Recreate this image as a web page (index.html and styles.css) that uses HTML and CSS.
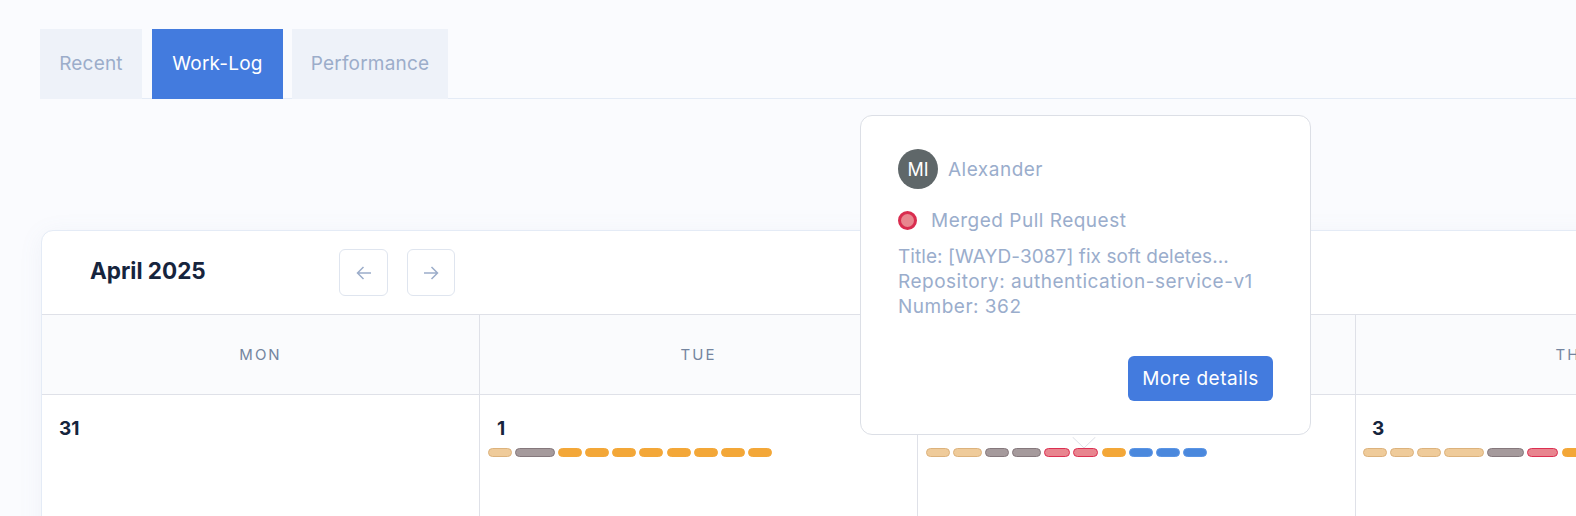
FILE: index.html
```html
<!DOCTYPE html>
<html lang="en">
<head>
  <meta charset="UTF-8" />
  <title>Work-Log</title>
  <link rel="stylesheet" href="styles.css">
</head>
<body>
  <div class="page">
    <div class="tabs">
      <a class="tab tab-recent">Recent</a>
      <a class="tab tab-active">Work-Log</a>
      <a class="tab tab-perf">Performance</a>
    </div>

    <div class="calendar">
      <div class="cal-head">
        <h2 class="cal-title">April 2025</h2>
        <button class="nav-btn nav-prev">
          <svg width="16" height="14" viewBox="0 0 16 14"><path d="M15 7H1.5M7.5 1L1.5 7l6 6" /></svg>
        </button>
        <button class="nav-btn">
          <svg width="16" height="14" viewBox="0 0 16 14"><path d="M1 7h13.5M8.5 1l6 6-6 6" /></svg>
        </button>
      </div>

      <div class="cal-grid">
        <div class="weekday">Mon</div>
        <div class="weekday">Tue</div>
        <div class="weekday">Wed</div>
        <div class="weekday">Thu</div>

        <div class="day">
          <div class="day-num">31</div>
        </div>
        <div class="day">
          <div class="day-num">1</div>
          <div class="pills">
            <span class="pill commit"></span>
            <span class="pill review w40"></span>
            <span class="pill orange"></span>
            <span class="pill orange"></span>
            <span class="pill orange"></span>
            <span class="pill orange"></span>
            <span class="pill orange"></span>
            <span class="pill orange"></span>
            <span class="pill orange"></span>
            <span class="pill orange"></span>
          </div>
        </div>
        <div class="day">
          <div class="day-num">2</div>
          <div class="pills">
            <span class="pill commit"></span>
            <span class="pill commit w29"></span>
            <span class="pill review"></span>
            <span class="pill review w29"></span>
            <span class="pill merged w25"></span>
            <span class="pill merged w25"></span>
            <span class="pill orange"></span>
            <span class="pill blue"></span>
            <span class="pill blue"></span>
            <span class="pill blue"></span>
          </div>
        </div>
        <div class="day day-last">
          <div class="day-num">3</div>
          <div class="pills">
            <span class="pill commit"></span>
            <span class="pill commit"></span>
            <span class="pill commit"></span>
            <span class="pill commit w40"></span>
            <span class="pill review w37"></span>
            <span class="pill merged w31"></span>
            <span class="pill orange"></span>
          </div>
        </div>
      </div>
    </div>

    <div class="popover">
      <div class="user">
        <span class="avatar">MI</span>
        <span>Alexander</span>
      </div>
      <div class="event">
        <span class="dot"></span>
        <span>Merged Pull Request</span>
      </div>
      <div class="meta">
        <div class="meta-title">Title: [WAYD-3087] fix soft deletes...</div>
        <div>Repository: authentication-service-v1</div>
        <div>Number: 362</div>
      </div>
      <div class="actions">
        <button class="details-btn">More details</button>
      </div>
      <svg class="arrow" width="24" height="12" viewBox="0 0 24 12"><path d="M0.5 0L12 11L23.5 0" /></svg>
    </div>
  </div>
</body>
</html>
```

FILE: styles.css
```css
body {
  margin: 0;
  height: 516px;
  overflow: hidden;
  background: #fafbfe;
  font-family: 'Inter', sans-serif;
}
.page {
  padding: 29px 0 0 40px;
}
.tabs {
  display: flex;
  height: 70px;
  border-bottom: 1px solid #e4ebf6;
  box-sizing: border-box;
}
.tab {
  display: flex;
  align-items: center;
  justify-content: center;
  height: 70px;
  padding: 0 0 2px;
  background: #eef2f9;
  color: #9cadca;
  font-size: 19px;
  letter-spacing: 0.2px;
  box-sizing: border-box;
}
.tab-recent { width: 102px; }
.tab-active {
  width: 131px;
  margin-left: 10px;
  background: #437bde;
  color: #fff;
}
.tab-perf {
  width: 156px;
  margin-left: 9px;
}
.calendar {
  width: max-content;
  margin: 131px 0 0 1px;
  background: #fff;
  border: 1px solid #e4ebf6;
  border-radius: 12px 0 0 0;
  box-shadow: 0 4px 24px rgba(120, 140, 180, 0.08);
}
.cal-head {
  display: flex;
  align-items: center;
  height: 83px;
  padding-left: 48px;
}
.cal-title {
  width: 249px;
  margin: 0 0 4px;
  color: #16243d;
  font-size: 22.5px;
  font-weight: 700;
}
.nav-btn {
  display: flex;
  align-items: center;
  justify-content: center;
  width: 48px;
  height: 47px;
  margin: 0 20px 0 0;
  padding: 0;
  background: #fff;
  border: 1px solid #dfe5ef;
  border-radius: 6px;
}
.nav-prev {
  width: 49px;
  margin-right: 19px;
}
.nav-btn svg {
  fill: none;
  stroke: #9cadca;
  stroke-width: 1.5;
}
.cal-grid {
  display: grid;
  grid-template-columns: repeat(4, 438px);
  grid-template-rows: 80px 180px;
  border-top: 1px solid #dfe1e8;
}
.weekday {
  display: flex;
  align-items: center;
  justify-content: center;
  background: #fafbfd;
  border-right: 1px solid #dfe1e8;
  border-bottom: 1px solid #dfe1e8;
  color: #74859f;
  font-size: 15px;
  letter-spacing: 2px;
  text-transform: uppercase;
}
.day {
  padding: 22px 0 0 8px;
  border-right: 1px solid #dfe1e8;
}
.day-last {
  padding-left: 7px;
}
.day-num {
  height: 31px;
  margin-left: 9px;
  color: #16243d;
  font-size: 19px;
  font-weight: 700;
  line-height: 23px;
}
.pills {
  display: flex;
  gap: 3.1px;
}
.pill {
  width: 24px;
  height: 9px;
  border: 1px solid;
  border-radius: 5px;
  box-sizing: border-box;
}
.w25 { width: 25.5px; }
.w29 { width: 29px; }
.w31 { width: 31px; }
.w37 { width: 37px; }
.w40 { width: 40px; }
.commit { background: #efcb9a; border-color: #dcb27c; }
.review { background: #a59a9c; border-color: #85787c; }
.merged { background: #e8858f; border-color: #dc3052; }
.orange { background: #f3a738; border-color: #f3a738; }
.blue { background: #4a88dd; border-color: #5a94e4; }
.popover {
  position: absolute;
  left: 860px;
  top: 115px;
  width: 451px;
  height: 320px;
  padding: 33px 37px 0;
  background: #fff;
  border: 1px solid #dcdfe6;
  border-radius: 12px;
  box-sizing: border-box;
  color: #9aadcc;
  font-size: 19px;
  letter-spacing: 0.5px;
}
.user {
  display: flex;
  align-items: center;
  gap: 10px;
}
.avatar {
  display: flex;
  align-items: center;
  justify-content: center;
  width: 40px;
  height: 40px;
  background: #5f6769;
  border-radius: 50%;
  color: #fff;
  font-size: 18px;
  letter-spacing: 0;
}
.event {
  display: flex;
  align-items: center;
  gap: 14px;
  margin-top: 20px;
}
.dot {
  width: 19px;
  height: 19px;
  background: #e8878f;
  border: 3px solid #d92d4f;
  border-radius: 50%;
  box-sizing: border-box;
}
.meta {
  margin-top: 12px;
  line-height: 25px;
}
.meta-title {
  letter-spacing: 0.07px;
}
.actions {
  display: flex;
  justify-content: flex-end;
  margin-top: 37px;
}
.details-btn {
  width: 145px;
  height: 45px;
  padding: 0;
  background: #437bde;
  border: none;
  border-radius: 6px;
  color: #fff;
  font-family: inherit;
  font-size: 19px;
  letter-spacing: 0.5px;
}
.arrow {
  position: absolute;
  left: 211px;
  top: 321px;
  fill: #fff;
  stroke: #dcdfe6;
}
```
